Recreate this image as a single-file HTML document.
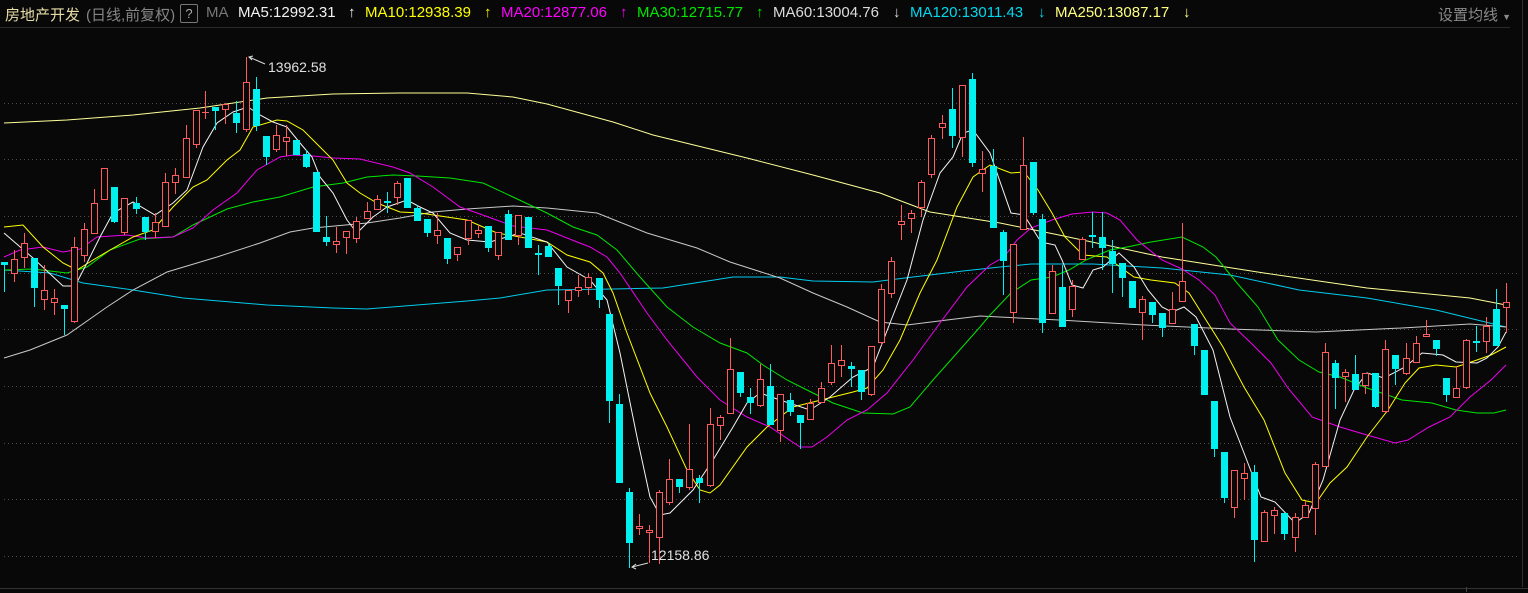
<!DOCTYPE html>
<html><head><meta charset="utf-8"><style>
html,body{margin:0;padding:0;background:#080808;width:1528px;height:593px;overflow:hidden}
#hd{position:absolute;left:0;top:0;width:1528px;height:27px;font:15px "Liberation Sans","Noto Sans CJK SC",sans-serif;white-space:nowrap}
#hd span{position:absolute;top:4px}
svg{position:absolute;left:0;top:0}
</style></head><body>
<svg id="s" width="1528" height="593" xmlns="http://www.w3.org/2000/svg"></svg>
<div id="hd">
<span style="left:5px;color:#e8dca8">房地产开发</span>
<span style="left:86px;color:#858585">(日线,前复权)</span>
<span style="left:180px;top:4px;width:16px;height:17px;border:1px solid #777;border-radius:2px;color:#aaa;text-align:center;line-height:17px;font-size:13px">?</span>
<span style="left:206px;color:#777">MA</span>
<span style="left:238px;color:#f2f2f2">MA5:12992.31</span><span style="left:348px;color:#f2f2f2">↑</span>
<span style="left:365px;color:#ffff00">MA10:12938.39</span><span style="left:484px;color:#ffff00">↑</span>
<span style="left:501px;color:#ff00ff">MA20:12877.06</span><span style="left:620px;color:#ff00ff">↑</span>
<span style="left:637px;color:#00e600">MA30:12715.77</span><span style="left:756px;color:#00e600">↑</span>
<span style="left:773px;color:#dcdcdc">MA60:13004.76</span><span style="left:893px;color:#dcdcdc">↓</span>
<span style="left:910px;color:#00d8f0">MA120:13011.43</span><span style="left:1038px;color:#00d8f0">↓</span>
<span style="left:1055px;color:#ffff80">MA250:13087.17</span><span style="left:1183px;color:#ffff80">↓</span>
<span style="left:1438px;color:#8a8a8a">设置均线 <small style="font-size:9px">▼</small></span>
</div>
<script>
var s=document.getElementById('s'),h='';
h+='<line x1="0" y1="27.5" x2="1510" y2="27.5" stroke="#2a2a2a"/>';
h+='<line x1="1522.5" y1="0" x2="1522.5" y2="587" stroke="#2e2e2e"/>';
h+='<line x1="0" y1="588.5" x2="1528" y2="588.5" stroke="#333"/>';
h+='<line x1="1466.5" y1="587" x2="1466.5" y2="592" stroke="#444"/>';
[103,159,216,273,329,386,443,499,556].forEach(function(y){h+='<line x1="4" y1="'+(y+.5)+'" x2="1520" y2="'+(y+.5)+'" stroke="#4a4a4a" stroke-dasharray="1,3"/>';});
function pl(c,p){var d='';for(var i=0;i<p.length;i+=2)d+=p[i]+','+p[i+1]+' ';h+='<polyline fill="none" stroke="'+c+'" stroke-width="1" points="'+d+'"/>';}
pl('#ffff99',[4,123,67,120,133,115,200,108,267,98,333,94,400,93,467,93,513,97,547,104,613,122,653,135,747,158,813,175,880,193,930,212,1000,223,1059,235,1162,257,1264,273,1367,288,1470,298,1506,305]);
pl('#00ccee',[4,270,50,273,83,283,133,290,183,298,267,305,333,308,367,309,417,305,467,301,500,298,547,290,613,289,663,288,733,277,780,277,813,281,873,282,913,277,963,271,1000,267,1031,264,1093,264,1162,268,1230,275,1299,290,1367,298,1436,310,1506,327]);
pl('#c8c8c8',[4,358,30,350,67,335,107,307,133,290,167,272,217,257,260,243,290,232,313,228,367,223,400,218,433,212,467,209,513,206,547,208,597,213,647,233,697,248,730,262,780,278,813,293,847,307,880,322,907,325,947,320,980,316,1059,320,1144,325,1230,329,1316,332,1402,328,1470,324,1506,327]);
pl('#00e600',[4,270,33,269,67,273,87,267,110,250,140,239,173,237,193,225,227,209,253,202,280,197,313,187,343,183,367,177,393,175,417,176,450,178,483,183,513,197,547,213,573,227,597,235,617,250,640,277,667,307,693,327,720,343,747,353,763,365,787,380,813,393,833,403,863,413,893,414,910,407,933,380,957,353,980,327,990,315,1011,293,1031,280,1052,277,1069,270,1086,260,1110,250,1127,247,1151,242,1182,237,1203,247,1216,257,1237,283,1258,307,1278,340,1299,360,1319,372,1340,377,1367,388,1402,400,1432,403,1456,410,1477,413,1494,413,1506,410]);
pl('#ee00ee',[4,257,20,250,43,247,63,252,80,249,97,237,127,235,147,238,173,237,193,228,213,210,237,193,257,170,280,157,293,155,313,156,333,158,360,159,393,167,410,173,433,187,460,207,480,214,513,226,547,230,567,238,590,247,607,257,620,273,647,313,667,340,697,377,720,400,747,417,770,427,800,447,812,447,827,437,847,420,867,410,887,393,913,360,940,323,967,287,990,265,1004,257,1017,240,1031,228,1052,220,1072,214,1093,212,1107,213,1120,220,1137,240,1162,260,1182,269,1199,280,1215,295,1230,323,1251,343,1271,363,1288,388,1312,417,1340,427,1367,435,1395,443,1408,440,1429,427,1450,417,1470,397,1491,380,1506,365]);
pl('#ffff00',[4,227,23,225,43,247,63,263,77,270,93,260,110,250,133,237,153,230,173,207,193,187,207,180,227,160,240,150,253,127,277,120,287,121,303,130,320,147,333,160,347,183,360,193,377,203,400,212,420,213,440,216,467,220,497,233,520,237,547,242,567,255,590,262,603,273,613,293,627,333,650,393,667,427,687,470,700,490,710,493,720,485,747,447,767,427,793,407,813,402,833,397,853,392,867,388,883,370,900,340,920,293,937,260,957,207,973,177,990,165,1011,173,1024,172,1038,190,1052,213,1065,237,1083,255,1107,257,1120,267,1134,277,1151,280,1175,283,1189,293,1206,320,1223,347,1244,387,1264,420,1285,473,1302,500,1316,503,1330,483,1347,467,1367,437,1388,410,1405,383,1419,368,1436,365,1456,367,1477,360,1491,355,1506,347]);
pl('#f4f4f4',[4,233,33,258,63,286,75,286,87,263,100,237,113,213,133,202,155,215,173,203,187,190,203,147,217,123,233,112,248,107,260,115,273,122,287,127,300,143,312,157,320,177,333,193,347,220,357,233,373,217,387,207,407,200,420,207,433,213,450,233,467,240,490,242,520,233,547,242,567,267,590,280,607,300,620,353,637,437,650,497,660,515,670,513,693,490,713,460,733,427,747,403,760,393,780,400,810,410,830,397,853,377,873,367,890,323,907,280,923,220,940,173,953,157,963,133,973,130,990,153,1011,213,1024,215,1041,242,1055,245,1062,260,1072,285,1083,288,1093,270,1103,267,1119,253,1134,267,1148,290,1162,307,1172,312,1184,307,1196,317,1213,350,1230,417,1244,453,1261,497,1275,502,1295,523,1309,513,1323,480,1340,420,1354,390,1367,373,1384,378,1405,367,1422,353,1443,355,1456,362,1477,363,1487,358,1498,347,1506,332]);
var C=[[4,262,265,262,292,0],[14,259,273,250,282,1],[24,243,257,233,268,1],[34,258,288,258,307,0],[44,290,299,265,310,1],[54,298,302,289,315,1],[64,305,309,305,335,0],[74,247,321,237,323,1],[84,229,255,223,262,1],[94,203,233,189,233,1],[104,168,199,168,199,1],[114,187,222,187,223,0],[124,198,232,198,235,1],[136,203,209,197,214,0],[145,217,232,217,240,0],[155,222,231,213,238,1],[165,182,226,173,226,1],[175,175,182,168,194,1],[186,138,177,125,177,1],[196,110,144,110,148,1],[205,112,113,91,119,1],[215,107,111,107,130,0],[225,104,109,103,124,1],[236,113,123,101,133,0],[246,82,129,57,132,1],[256,89,126,77,131,0],[266,136,157,136,165,0],[276,135,149,125,152,1],[286,137,141,125,156,1],[296,140,155,140,155,0],[306,154,167,150,168,0],[316,172,232,172,232,0],[326,237,242,216,246,0],[336,241,244,227,253,1],[346,231,237,231,254,1],[356,221,238,217,243,1],[367,211,218,202,216,1],[377,199,209,195,209,1],[387,201,202,192,213,0],[397,183,197,181,205,1],[407,178,208,178,208,0],[417,208,221,205,221,0],[427,219,233,219,237,0],[437,230,235,213,244,1],[447,238,259,238,264,0],[457,247,254,247,261,1],[468,220,238,220,245,1],[478,230,233,225,238,1],[488,226,248,226,252,0],[498,232,255,232,260,1],[508,214,240,210,240,0],[518,215,235,215,245,1],[528,217,248,217,248,0],[538,253,254,245,275,0],[548,246,257,243,257,0],[558,268,286,268,305,0],[568,290,300,290,313,1],[578,287,290,275,297,1],[588,277,287,273,295,1],[599,278,300,278,308,0],[609,314,401,314,423,0],[619,404,483,394,483,0],[629,492,543,488,568,0],[639,526,528,514,535,1],[649,530,532,525,563,1],[659,492,537,490,564,1],[669,479,502,459,505,1],[679,479,487,479,493,0],[689,469,487,424,490,1],[699,478,483,475,503,0],[710,424,485,408,487,1],[720,417,425,415,440,1],[730,369,413,338,413,1],[740,372,393,372,397,0],[750,397,403,388,414,0],[760,379,405,364,407,1],[770,386,425,364,425,0],[780,394,430,394,442,1],[790,400,412,393,416,0],[800,415,423,415,449,0],[810,403,419,399,419,1],[821,388,402,382,402,1],[831,363,382,345,385,1],[841,360,365,345,377,1],[851,366,369,362,387,0],[861,370,392,370,400,0],[871,346,394,346,396,1],[881,289,342,284,345,1],[891,261,293,257,298,1],[901,221,224,205,240,1],[911,213,218,210,233,1],[921,182,207,180,217,1],[931,138,174,135,178,1],[942,123,127,115,139,1],[952,109,136,88,148,0],[962,85,137,85,157,1],[972,79,163,73,167,0],[982,169,173,151,192,1],[993,166,228,149,228,0],[1003,232,261,230,295,0],[1013,244,312,244,323,1],[1023,165,229,137,229,1],[1033,162,213,162,215,0],[1042,219,323,214,333,0],[1052,271,313,265,313,1],[1062,287,327,265,327,0],[1072,286,309,280,317,1],[1082,239,259,237,259,1],[1092,235,236,212,248,0],[1102,237,248,212,270,0],[1112,251,264,240,293,0],[1122,263,278,263,297,0],[1132,281,308,281,308,0],[1142,299,312,296,340,1],[1152,302,315,302,323,0],[1162,313,328,313,337,0],[1172,309,323,292,323,1],[1182,281,301,223,301,1],[1194,324,346,324,355,0],[1204,350,395,350,395,0],[1214,401,449,401,457,0],[1224,452,498,452,503,0],[1234,470,507,470,518,1],[1244,473,478,463,500,1],[1254,472,540,465,562,0],[1264,512,541,510,541,1],[1274,510,515,507,534,1],[1284,513,534,513,540,0],[1295,517,537,513,552,1],[1305,505,517,501,517,1],[1315,464,508,462,535,1],[1325,352,466,343,466,1],[1335,363,378,360,409,0],[1345,372,376,369,402,1],[1355,374,390,355,390,0],[1365,373,385,373,394,1],[1375,373,407,373,408,0],[1385,349,411,340,413,1],[1395,355,369,355,385,0],[1406,358,373,343,375,1],[1416,343,362,336,362,1],[1426,334,336,320,337,1],[1436,340,349,340,356,0],[1446,378,395,378,402,0],[1456,388,397,366,397,1],[1466,340,387,339,389,1],[1476,341,343,326,352,0],[1486,326,341,317,353,1],[1496,309,346,289,346,0],[1506,302,307,283,333,1]];
C.forEach(function(c){var x=c[0],r=c[5],col=r?'#ff5b5b':'#00f0f0';
h+='<line x1="'+(x+.5)+'" y1="'+c[3]+'" x2="'+(x+.5)+'" y2="'+c[4]+'" stroke="'+col+'"/>';
var bh=c[2]-c[1];
if(r){ if(bh<2){h+='<line x1="'+(x-3)+'" y1="'+(c[1]+.5)+'" x2="'+(x+4)+'" y2="'+(c[1]+.5)+'" stroke="'+col+'"/>';}
 else h+='<rect x="'+(x-2.5)+'" y="'+(c[1]+.5)+'" width="6" height="'+(bh)+'" fill="#080808" stroke="'+col+'"/>';}
else{ h+='<rect x="'+(x-3)+'" y="'+c[1]+'" width="7" height="'+Math.max(bh,2)+'" fill="'+col+'"/>';}
});
h+='<polyline points="265,64 249,57" stroke="#ddd" fill="none"/><polyline points="253,56 249,57 252,60" stroke="#ddd" fill="none"/>';
h+='<text x="268" y="72" fill="#e0e0e0" font-family="Liberation Sans" font-size="14">13962.58</text>';
h+='<polyline points="648,563 632,567" stroke="#ddd" fill="none"/><polyline points="636,564 632,567 636,569" stroke="#ddd" fill="none"/>';
h+='<text x="651" y="560" fill="#e0e0e0" font-family="Liberation Sans" font-size="14">12158.86</text>';
s.innerHTML=h;
</script>
</body></html>
